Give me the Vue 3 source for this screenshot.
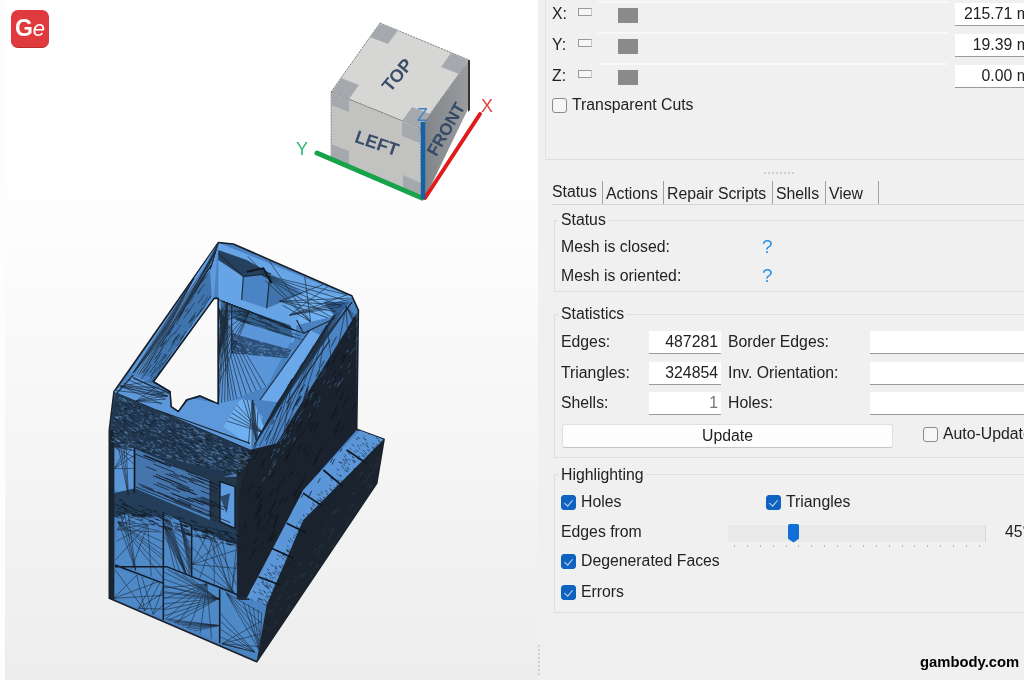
<template>
  <div class="app">
    <!-- 3D viewport -->
    <div class="viewport">
      <div class="logo"><span class="logo-g">G</span><span class="logo-e">e</span></div>

      <svg class="cube" viewBox="0 0 210 200" width="210" height="200">
        <defs>
          <linearGradient id="frontShade" x1="0" y1="0" x2="1" y2="0">
            <stop offset="0" stop-color="#7f8388" />
            <stop offset="1" stop-color="#9a9c9e" />
          </linearGradient>
        </defs>
        <polygon points="90,13 179,50 130,118 41,82" fill="#d6d7d5" stroke="#333" stroke-width="0.6" stroke-dasharray="2 1" />
        <polygon points="41,82 130,118 132,190 41,147" fill="#c2c2c0" stroke="#444" stroke-width="0.5" stroke-dasharray="2 1" />
        <polygon points="130,118 179,50 179,97 135,188" fill="url(#frontShade)" />
        <polygon points="178,50 180,50 180,100 178,102" fill="#30343a" />
        <g fill="#a5a9ae">
          <polygon points="90,14 108,20 98,34 80,27" />
          <polygon points="178,50 161,43 151,57 169,64" />
          <polygon points="42,82 51,68 69,75 59,89" />
          <polygon points="130,118 112,111 122,97 140,104" />
          <polygon points="41,83 59,90 59,102 41,95" />
          <polygon points="41,147 59,155 59,141 41,134" />
          <polygon points="130,119 112,112 112,126 130,133" />
          <polygon points="131,188 113,180 113,165 131,173" />
        </g>
        <text class="cube-label" transform="translate(112,69) rotate(-50)" text-anchor="middle">TOP</text>
        <text class="cube-label" transform="translate(85,139) rotate(19)" text-anchor="middle">LEFT</text>
        <text class="cube-label front" transform="translate(161,122) rotate(-60)" text-anchor="middle">FRONT</text>
        <line x1="27" y1="143" x2="132" y2="188" stroke="#18a34a" stroke-width="5" stroke-linecap="round" />
        <line x1="135" y1="188" x2="190" y2="104" stroke="#e01b1b" stroke-width="4" stroke-linecap="round" />
        <line x1="133" y1="112" x2="133" y2="189" stroke="#1561a8" stroke-width="4.5" />
        <text class="axis" x="6" y="145" fill="#2eb872">Y</text>
        <text class="axis" x="191" y="102" fill="#e0453f">X</text>
        <text class="axis" x="127" y="111" fill="#3d85c6">Z</text>
      </svg>

      <svg class="mesh" viewBox="0 0 900 1320" width="300" height="440">
        <clipPath id="meshClip">
          <path :d="silhouette" clip-rule="evenodd" />
        </clipPath>
        <path :d="silhouette" fill="#4a82c2" fill-rule="evenodd" stroke="#1a2029" stroke-width="5" stroke-linejoin="round" />
        <g clip-path="url(#meshClip)">
          <polygon v-for="(p, i) in faces" :key="i" :points="p.points" :fill="p.fill" />
          <path v-for="(l, i) in lines" :key="'l' + i" :d="l.d" :stroke="l.stroke" :stroke-width="l.width" fill="none" />
        </g>
        <path :d="hole" fill="none" stroke="#16202c" stroke-width="4" stroke-linejoin="round" />
      </svg>
    </div>

    <!-- Right side panel -->
    <div class="panel">
      <div class="grip"></div>

      <div class="bounds">
        <div v-for="row in axes" :key="row.name" class="axis-row">
          <span class="axis-name">{{ row.name }}:</span>
          <span class="swatch"></span>
          <div class="axis-track"><span class="square"></span></div>
          <div class="value">{{ row.value }} mm</div>
        </div>
        <label class="check-row transparent"><span class="check"></span>Transparent Cuts</label>
      </div>

      <div class="splitter"><span class="dots"></span></div>

      <div class="tabs">
        <div v-for="t in tabs" :key="t.name" class="tab" :class="{ active: t.active }" :style="{ width: t.width + 'px' }">{{ t.name }}</div>
      </div>

      <fieldset class="group status">
        <legend>Status</legend>
        <div class="status-row"><span class="status-label">Mesh is closed:</span><span class="q">?</span></div>
        <div class="status-row"><span class="status-label">Mesh is oriented:</span><span class="q">?</span></div>
      </fieldset>

      <fieldset class="group stats">
        <legend>Statistics</legend>
        <div class="stats-grid">
          <template v-for="s in stats" :key="s.label">
            <span>{{ s.label }}</span>
            <div class="value small" :class="{ muted: s.muted }">{{ s.value }}</div>
            <span class="other">{{ s.other }}</span>
            <div class="value wide"></div>
          </template>
        </div>
        <div class="update-row">
          <button class="update">Update</button>
          <label class="check-row auto"><span class="check"></span>Auto-Update</label>
        </div>
      </fieldset>

      <fieldset class="group highlight">
        <legend>Highlighting</legend>
        <div class="hl-row first">
          <label class="check-row holes"><span class="check on"></span>Holes</label>
          <label class="check-row"><span class="check on"></span>Triangles</label>
        </div>
        <div class="hl-row edges">
          <span class="edges-label">Edges from</span>
          <div class="slider">
            <div class="slider-track"><span class="thumb"></span></div>
            <div class="ticks"><i v-for="n in 20" :key="n"></i></div>
          </div>
          <span class="deg">45°</span>
        </div>
        <div class="hl-row"><label class="check-row"><span class="check on"></span>Degenerated Faces</label></div>
        <div class="hl-row"><label class="check-row"><span class="check on"></span>Errors</label></div>
      </fieldset>

      <div class="watermark">gambody.com</div>
    </div>
  </div>
</template>

<script setup>
const axes = [
  { name: 'X', value: '215.71' },
  { name: 'Y', value: '19.39' },
  { name: 'Z', value: '0.00' },
]

const tabs = [
  { name: 'Status', width: 51, active: true },
  { name: 'Actions', width: 61 },
  { name: 'Repair Scripts', width: 109 },
  { name: 'Shells', width: 53 },
  { name: 'View', width: 53 },
]

const stats = [
  { label: 'Edges:', value: '487281', other: 'Border Edges:' },
  { label: 'Triangles:', value: '324854', other: 'Inv. Orientation:' },
  { label: 'Shells:', value: '1', other: 'Holes:', muted: true },
]

// mesh outline, coordinates are in the 900x1320 viewBox
const outer = 'M385 38 L430 42 L785 197 L805 240 L800 598 L882 628 L860 760 L500 1295 L58 1105 L58 600 L72 485 Z'
const hole = 'M372 205 L385 205 L385 522 L330 498 L290 510 L265 545 L243 530 L240 485 L190 455 Z'
const silhouette = outer + ' ' + hole

let seed = 41
const rnd = () => {
  seed = (seed * 16807) % 2147483647
  return seed / 2147483647
}

const toPoints = (pts) => pts.map((p) => p.join(',')).join(' ')

const panelA = [[85, 860], [115, 850], [220, 910], [220, 1050], [75, 1000]]
const panelB = [[223, 850], [303, 890], [303, 1035], [223, 1010]]
const panelC = [[307, 895], [440, 945], [440, 1090], [307, 1040]]
const panelD = [[75, 1015], [220, 1060], [220, 1165], [70, 1105]]
const panelE = [[223, 1015], [387, 1075], [387, 1235], [223, 1165]]
const panelF = [[392, 1080], [515, 1145], [510, 1270], [392, 1240]]
const wall = [[385, 210], [385, 522], [440, 505], [530, 470], [620, 300], [430, 225]]
const ledge = [[385, 38], [785, 200], [720, 262], [620, 285], [610, 340], [430, 225], [385, 205]]
const shoulder = [[785, 215], [725, 262], [560, 520], [490, 650], [560, 640], [800, 300]]

const faces = [
  { fill: '#5f9bdc', pts: [[385, 38], [120, 425], [195, 445], [372, 205]] },
  { fill: '#3f74ad', pts: [[360, 120], [155, 435], [195, 445], [365, 200]] },
  { fill: '#66a4e6', pts: ledge },
  { fill: '#3f74ad', pts: [[540, 130], [640, 190], [530, 235]] },
  { fill: '#4a84c4', pts: [[460, 140], [540, 130], [530, 235], [455, 210]] },
  { fill: '#6fb0f0', pts: [[640, 190], [785, 200], [720, 262], [620, 285]] },
  { fill: '#2f5f96', pts: [[700, 215], [780, 215], [740, 265]] },
  { fill: '#25405e', pts: [[385, 60], [470, 90], [540, 130], [460, 140], [385, 90]] },
  { fill: '#5b97d8', pts: wall },
  { fill: '#33618f', pts: [[425, 225], [600, 285], [610, 325], [425, 265]] },
  { fill: '#2c5078', pts: [[425, 310], [605, 360], [590, 385], [425, 370]] },
  { fill: '#6aa8ea', pts: [[660, 300], [720, 330], [590, 520], [510, 510]] },
  { fill: '#4a84c4', pts: shoulder },
  { fill: '#5c98da', pts: [[72, 485], [130, 435], [240, 490], [245, 530], [265, 545], [300, 505], [385, 520], [460, 505], [520, 560], [480, 660], [200, 540]] },
  { fill: '#6fb0f0', pts: [[450, 510], [490, 510], [525, 600], [485, 650], [400, 590]] },
  { fill: '#223850', pts: [[58, 600], [75, 490], [480, 660], [445, 730], [360, 750], [135, 655], [58, 650]] },
  { fill: '#4475ad', pts: [[135, 655], [360, 750], [360, 860], [135, 770]] },
  { fill: '#5a96d6', pts: [[73, 650], [133, 660], [133, 805], [73, 780]] },
  { fill: '#24364a', pts: [[360, 740], [445, 740], [445, 930], [360, 880]] },
  { fill: '#5d9ce0', pts: [[390, 755], [435, 770], [435, 895], [390, 875]] },
  { fill: '#2c4a6c', pts: [[390, 800], [420, 790], [410, 850]] },
  { fill: '#243e5a', pts: [[70, 790], [135, 775], [445, 905], [445, 950], [220, 860], [70, 860]] },
  { fill: '#1e2a38', pts: [[440, 660], [480, 660], [480, 1110], [440, 1110]] },
  { fill: '#4f8ac8', pts: panelA },
  { fill: '#4f8ac8', pts: panelB },
  { fill: '#4f8ac8', pts: panelC },
  { fill: '#4f8ac8', pts: panelD },
  { fill: '#4f8ac8', pts: panelE },
  { fill: '#4f8ac8', pts: panelF },
  { fill: '#19222d', pts: [[480, 660], [560, 640], [800, 250], [800, 600], [640, 780], [560, 950], [470, 1100], [445, 1100], [445, 800]] },
  { fill: '#5b96d8', pts: [[470, 1105], [530, 1125], [640, 870], [880, 628], [810, 600], [640, 780]] },
  { fill: '#1b242e', pts: [[530, 1125], [500, 1295], [860, 760], [882, 628], [640, 870]] },
  { fill: '#1a2430', pts: [[58, 600], [73, 600], [73, 1110], [58, 1105]] },
].map((f) => ({ fill: f.fill, points: toPoints(f.pts) }))

const onEdge = (pts, k) => {
  const i = Math.floor(k) % pts.length
  const a = pts[i]
  const b = pts[(i + 1) % pts.length]
  const t = k - Math.floor(k)
  return [(a[0] + (b[0] - a[0]) * t).toFixed(1), (a[1] + (b[1] - a[1]) * t).toFixed(1)]
}

// thin triangle fans: each one starts on the outline and spreads over part of it
const fans = (pts, count, per) => {
  let d = ''
  for (let c = 0; c < count; c++) {
    const start = rnd() * pts.length
    const [ax, ay] = onEdge(pts, start)
    const spread = 0.5 + rnd() * 1.2
    const from = start + 0.6 + rnd() * (pts.length - 2)
    for (let i = 0; i < per; i++) {
      const [bx, by] = onEdge(pts, from + (spread * i) / per)
      d += `M${ax} ${ay}L${bx} ${by}`
    }
  }
  return d
}

// short random strokes inside a quad, for the dense parts of the mesh
const hatch = (q, n, len, dirX, dirY) => {
  let d = ''
  for (let i = 0; i < n; i++) {
    const u = rnd()
    const v = rnd()
    const x = (q[0][0] * (1 - u) + q[1][0] * u) * (1 - v) + (q[3][0] * (1 - u) + q[2][0] * u) * v
    const y = (q[0][1] * (1 - u) + q[1][1] * u) * (1 - v) + (q[3][1] * (1 - u) + q[2][1] * u) * v
    const l = len * (0.4 + rnd())
    d += `M${x.toFixed(1)} ${y.toFixed(1)}l${(dirX * l).toFixed(1)} ${(dirY * l).toFixed(1)}`
  }
  return d
}

const dark = '#1c2a3a'
const band = [[75, 495], [480, 665], [445, 735], [62, 640]]
const ramp = [[470, 1105], [530, 1125], [880, 628], [810, 600]]
const darkWall = [[480, 660], [800, 250], [800, 600], [445, 1100]]

const lines = [
  { stroke: dark, width: 1.8, d: fans([[385, 38], [120, 425], [155, 435], [360, 120]], 5, 6) },
  { stroke: dark, width: 1.8, d: hatch([[360, 120], [365, 200], [195, 445], [155, 435]], 60, 30, -0.55, 0.83) },
  { stroke: dark, width: 2, d: fans(wall, 5, 9) },
  { stroke: dark, width: 2, d: fans([[460, 60], [785, 200], [720, 262], [620, 285]], 4, 5) },
  { stroke: dark, width: 2, d: fans(shoulder, 7, 6) },
  { stroke: '#16202c', width: 1.6, d: hatch([[425, 225], [600, 285], [610, 325], [425, 265]], 40, 40, 1, 0.33) },
  { stroke: '#6a9fd8', width: 1.4, d: hatch([[425, 310], [605, 360], [590, 385], [425, 370]], 90, 8, 1, 0.2) },
  { stroke: dark, width: 3.5, d: 'M385 70L460 140L455 210M460 140L540 130L530 235M620 270L640 310L735 265M660 300L510 510M720 330L590 520M130 435L80 490L480 660M130 445L240 490M200 540L480 640M425 225L425 370' },
  { stroke: '#0f1722', width: 6, d: 'M470 125L520 115L545 160' },
  { stroke: dark, width: 2, d: fans([[72, 485], [130, 435], [240, 490], [200, 540]], 3, 5) + fans([[450, 510], [490, 510], [525, 600], [485, 650], [400, 590]], 3, 5) },
  { stroke: '#6a9fd8', width: 1.4, d: hatch(band, 480, 9, 1, 0.4) },
  { stroke: '#101820', width: 1.4, d: hatch(band, 300, 12, 0.9, 0.45) },
  { stroke: '#16202c', width: 2.4, d: hatch([[135, 655], [360, 750], [360, 860], [135, 770]], 55, 60, 1, 0.4) + 'M135 655L360 750L360 860L135 770Z' },
  { stroke: dark, width: 1.8, d: fans([[73, 650], [133, 660], [133, 805], [73, 780]], 3, 4) },
  { stroke: '#101820', width: 4, d: 'M390 755L435 770L435 895L390 875Z M133 655L133 790' },
  { stroke: '#101820', width: 2, d: hatch([[70, 800], [445, 915], [445, 950], [70, 860]], 200, 16, 1, 0.35) },
  { stroke: dark, width: 1.8, d: fans(panelA, 5, 4) + fans(panelB, 3, 8) + fans(panelC, 4, 4) },
  { stroke: dark, width: 1.8, d: fans(panelD, 4, 3) + fans(panelE, 4, 8) + fans(panelF, 4, 5) },
  { stroke: '#141c26', width: 4.5, d: 'M75 1010L230 1010L445 1095M220 850L220 1170M305 885L305 1040M389 1078L389 1240M75 1005L220 1060' },
  { stroke: '#4a80b8', width: 1.4, d: hatch([[560, 640], [800, 250], [800, 400], [500, 780]], 70, 14, 0.5, -0.85) },
  { stroke: '#0a1016', width: 2, d: hatch(darkWall, 120, 30, 0.45, -0.85) },
  { stroke: '#16202c', width: 1.8, d: hatch(ramp, 420, 9, 0.7, 0.5) },
  { stroke: '#0f161e', width: 5, d: 'M505 1040L570 1065M545 955L610 985M590 880L650 910M640 790L700 830M700 720L760 770M770 660L830 700' },
  { stroke: '#3a4550', width: 1.4, d: hatch([[530, 1125], [500, 1295], [860, 760], [882, 628]], 90, 14, 0.6, -0.75) },
]
</script>

<style scoped>
.app {
  display: flex;
  width: 1024px;
  height: 680px;
  overflow: hidden;
  font-family: "Liberation Sans", Arial, sans-serif;
  font-size: 15.8px;
  color: #222;
  filter: blur(0.35px);
}

.viewport {
  position: relative;
  flex: 0 0 533px;
  border-left: 5px solid #fdfdfd;
  background: linear-gradient(#fff 0, #fff 25%, #ededed 100%);
}

.logo {
  position: absolute;
  left: 6px;
  top: 10px;
  width: 38px;
  height: 38px;
  border-radius: 7px;
  background: #e03a3e;
  border-bottom: 1px solid #b92c30;
  color: #fff;
  display: flex;
  align-items: center;
  justify-content: center;
  box-sizing: border-box;
  line-height: 1;
}

.logo-g {
  font-size: 23px;
  font-weight: 700;
}

.logo-e {
  font-size: 22px;
  font-style: italic;
}

.cube {
  position: absolute;
  left: 285px;
  top: 10px;
}

.cube-label {
  font-size: 18px;
  font-weight: 700;
  fill: #3a4e68;
}

.cube-label.front {
  font-size: 17px;
  fill: #344a66;
}

.axis {
  font-size: 18px;
}

.mesh {
  position: absolute;
  left: 85px;
  top: 230px;
}

.panel {
  position: relative;
  flex: 1;
  min-width: 0;
  background: #f0f0f0;
  overflow: hidden;
}

.grip {
  position: absolute;
  left: 0;
  top: 645px;
  width: 3px;
  height: 30px;
  border-left: 2px dotted #d0d0d0;
}

.bounds {
  height: 158px;
  margin-left: 7px;
  padding: 1px 0 0 6px;
  border-left: 1px solid #e2e2e2;
  border-bottom: 1px solid #dedede;
}

.axis-row {
  display: flex;
  align-items: stretch;
  height: 31px;
}

.axis-name {
  flex: none;
  width: 26px;
  line-height: 26px;
}

.swatch {
  flex: none;
  width: 14px;
  height: 8px;
  margin: 7px 6px 0 0;
  border: 1px solid #9a9a9a;
  border-right-color: #c8c8c8;
  background: #f6f6f6;
  box-sizing: border-box;
}

.axis-track {
  flex: none;
  width: 350px;
  padding: 5px 0 0 20px;
  border-top: 2px solid #f8f8f8;
  box-sizing: border-box;
}

.square {
  display: block;
  width: 20px;
  height: 15px;
  background: #8a8a8a;
}

.value {
  flex: none;
  margin: 2px 0 6px 7px;
  width: 88px;
  height: 22px;
  text-align: right;
  line-height: 22px;
  white-space: nowrap;
  background: #fff;
  border-bottom: 1px solid #9a9a9a;
}

.check-row {
  display: flex;
  align-items: center;
  white-space: nowrap;
}

.check {
  position: relative;
  width: 15px;
  height: 15px;
  margin-right: 5px;
  border: 1px solid #8a8a8a;
  border-radius: 3px;
  background: #f6f6f6;
  box-sizing: border-box;
  flex: none;
}

.check.on {
  background: #0f62c0;
  border-color: #0f62c0;
}

.check.on::after {
  content: "";
  position: absolute;
  left: 4px;
  top: 2px;
  width: 4px;
  height: 7px;
  border: solid #c4daf2;
  border-width: 0 1px 1px 0;
  transform: rotate(40deg);
}

.transparent {
  height: 22px;
}

.splitter {
  height: 21px;
  display: flex;
  justify-content: center;
  align-items: flex-end;
  box-sizing: border-box;
}

.dots {
  width: 30px;
  margin: 0 0 7px -4px;
  border-top: 2px dotted #cfcfcf;
}

.tabs {
  display: flex;
  height: 24px;
  margin-left: 14px;
  border-bottom: 1px solid #d4d4d4;
  box-sizing: border-box;
}

.tab {
  padding: 4px 0 0 3px;
  height: 23px;
  box-sizing: border-box;
  border-right: 1px solid #a0a0a0;
  line-height: 18px;
  white-space: nowrap;
}

.tab.active {
  padding: 2px 0 0 0;
}

.group {
  margin: 0 0 0 16px;
  padding: 0 0 0 6px;
  border: 1px solid #dedede;
  border-right: none;
  min-width: 0;
}

.group legend {
  margin-left: -3px;
  padding: 0 2px 0 3px;
  line-height: 18px;
  height: 18px;
}

.status {
  margin-top: 6px;
  padding-top: 4px;
  padding-bottom: 1px;
}

.status-row {
  display: flex;
  height: 28.5px;
  line-height: 28px;
}

.status-label {
  width: 201px;
}

.q {
  color: #2a92e8;
  font-size: 19px;
}

.stats {
  margin-top: 13px;
  padding-top: 8px;
  padding-bottom: 9px;
}

.stats-grid {
  display: grid;
  grid-template-columns: 88px 72px 149px 160px;
  grid-auto-rows: 30.5px;
  align-items: start;
  line-height: 22px;
}

.other {
  margin-left: 7px;
  white-space: nowrap;
}

.value.small {
  margin: 0;
  width: 69px;
  padding-right: 3px;
}

.value.muted {
  color: #777;
}

.value.wide {
  margin: 0;
  width: 160px;
}

.update-row {
  display: flex;
  align-items: center;
  height: 24px;
  margin-top: 1px;
}

.update {
  flex: none;
  width: 331px;
  height: 24px;
  margin: 0 0 0 1px;
  padding: 0;
  font: inherit;
  color: #222;
  background: #fdfdfd;
  border: 1px solid #e0e0e0;
  border-bottom-color: #c4c4c4;
  border-radius: 3px;
}

.auto {
  flex: none;
  margin: -3px 0 0 30px;
}

.highlight {
  margin-top: 8px;
  padding-top: 7px;
  padding-bottom: 4px;
}

.hl-row {
  display: flex;
  align-items: center;
  height: 31px;
}

.hl-row.first {
  height: 23px;
  margin-bottom: 5px;
}

.hl-row.edges {
  height: 27px;
}

.holes {
  width: 205px;
}

.edges-label {
  flex: none;
  width: 167px;
}

.slider {
  flex: none;
  position: relative;
  width: 258px;
  padding-top: 8px;
}

.slider-track {
  position: relative;
  height: 17px;
  background: #e8e9e8;
  border-right: 1px solid #d8d8d8;
}

.thumb {
  position: absolute;
  left: 60px;
  top: -1px;
  width: 11px;
  height: 19px;
  background: #0f6fd6;
  border-radius: 2px 2px 0 0;
  clip-path: polygon(0 0, 100% 0, 100% 80%, 50% 100%, 0 80%);
}

.ticks {
  display: flex;
  justify-content: space-between;
  height: 3px;
  margin: 3px 6px 0;
}

.ticks i {
  width: 1px;
  height: 2px;
  background: #bbb;
}

.deg {
  flex: none;
  margin-left: 19px;
}

.watermark {
  position: absolute;
  left: 382px;
  top: 654px;
  font-size: 14.8px;
  font-weight: 700;
  color: #000;
  white-space: nowrap;
}
</style>
